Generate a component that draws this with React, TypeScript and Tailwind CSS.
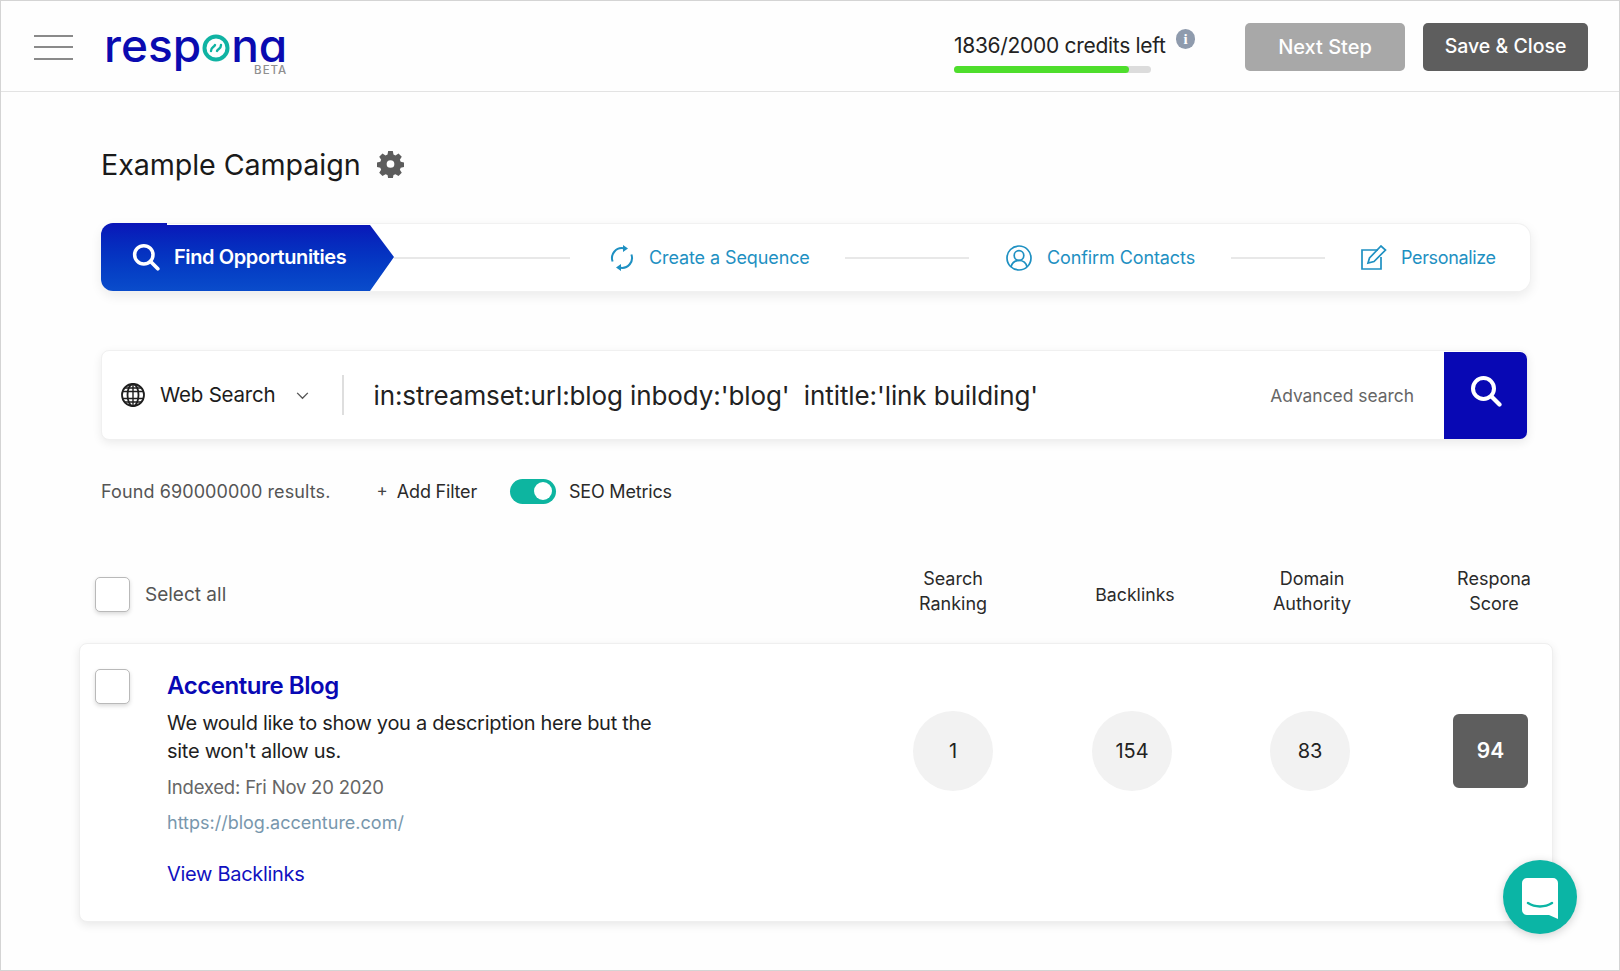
import { useState } from 'react'

function Checkbox() {
  return <div className="w-[35px] h-[35px] rounded-[5px] border border-[#b9b9b9] bg-white shadow-[0_2px_4px_rgba(0,0,0,0.15)] shrink-0" />
}

function SearchIcon({ className }: { className: string }) {
  return (
    <svg viewBox="0 0 32 32" fill="none" stroke="currentColor" className={className}>
      <circle cx="13.5" cy="13.5" r="10.5" strokeWidth="4" />
      <path d="M21.5 21.5 L29.5 29.5" strokeWidth="4.2" strokeLinecap="round" />
    </svg>
  )
}

function Gear() {
  return (
    <svg viewBox="0 0 28 28" className="w-[27px] h-[28px] ml-[16px] mt-[-2px] text-[#5c5c5c]" fill="currentColor">
      <path
        fillRule="evenodd"
        d="M11.6 0.6h4.8l0.7 3.6 2.1 0.9 3.1-2 3.4 3.4-2 3.1 0.9 2.1 3.6 0.7v4.8l-3.6 0.7-0.9 2.1 2 3.1-3.4 3.4-3.1-2-2.1 0.9-0.7 3.6h-4.8l-0.7-3.6-2.1-0.9-3.1 2-3.4-3.4 2-3.1-0.9-2.1-3.6-0.7v-4.8l3.6-0.7 0.9-2.1-2-3.1 3.4-3.4 3.1 2 2.1-0.9z M14 10a4 4 0 1 0 0 8 4 4 0 0 0 0-8z"
      />
    </svg>
  )
}

function Metric({ value }: { value: string }) {
  return <div className="w-[80px] h-[80px] rounded-full bg-[#f2f2f2] flex items-center justify-center text-[20px] text-[#222]">{value}</div>
}

export default function App() {
  const [seo, setSeo] = useState(true)

  return (
    <div className="relative w-[1620px] h-[971px] overflow-hidden bg-[#fefefe] border border-[#d4d4d4] font-['Inter',sans-serif] text-[#1c1c1c]">
      <header className="h-[91px] flex items-center border-b border-[#e3e3e3]">
        <div className="ml-[33px] mt-[2px] w-[39px] flex flex-col gap-[9.5px]">
          <span className="h-[2px] bg-[#8a8a8a]" />
          <span className="h-[2px] bg-[#8a8a8a]" />
          <span className="h-[2px] bg-[#8a8a8a]" />
        </div>
        <div className="relative ml-[31px] mt-[-2px] flex items-center text-[#0a0ab0] text-[46px] leading-[38px] font-medium [font-feature-settings:'cv11']">
          <span>resp</span>
          <svg viewBox="0 0 28 28" className="w-[28px] h-[28px] mt-[6px] mx-[1px]" fill="none" stroke="#10b3a3">
            <circle cx="14" cy="14" r="11.5" strokeWidth="4" />
            <path d="M9 17c0-4 3-3.500 4-6M19 11c0 4-3 3.500-4 6" strokeWidth="2.400" strokeLinecap="round" />
          </svg>
          <span>na</span>
          <span className="absolute right-0 top-[38px] text-[11.5px] leading-[12px] font-medium tracking-[1px] text-[#8f8f8f]">BETA</span>
        </div>

        <div className="ml-auto mt-[13px] flex flex-col">
          <div className="relative w-[241px] text-[21px] leading-[26px] tracking-[-0.3px] text-[#222]">
            1836/2000 credits left
            <span className="absolute right-0 top-[-4px] w-[19px] h-[20px] rounded-full bg-[#8f9bad] text-white text-[15px] leading-[20px] text-center font-semibold font-['Liberation_Serif',serif]">
              i
            </span>
          </div>
          <div className="mt-[7px] w-[197px] h-[7px] rounded-full bg-[#dcdcdc]">
            <div className="h-full w-[175px] rounded-full bg-[#4ede2c]" />
          </div>
        </div>
        <div className="ml-[50px] mr-[31px] mt-[2px] flex gap-[18px]">
          <button className="w-[160px] h-[48px] rounded-[5px] bg-[#a8a8a8] text-white text-[20px] font-medium">Next Step</button>
          <button className="w-[165px] h-[48px] rounded-[5px] bg-[#5e5e5e] text-white text-[19.5px] font-medium">Save &amp; Close</button>
        </div>
      </header>

      <main className="pl-[100px] pr-[60px]">
        <div className="flex items-center pt-[55px]">
          <h1 className="text-[28.7px] leading-[36px] tracking-[-0.1px] text-[#1a1a1a]">Example Campaign</h1>
          <Gear />
        </div>

        <div className="mt-[40px] h-[69px] w-[1430px] rounded-[14px] bg-white shadow-[0_4px_12px_rgba(0,0,0,0.08)] border border-[#f1f1f1] border-l-0 flex items-center text-[#1e90c2] text-[18px] tracking-[-0.1px]">
          <div className="w-[293px] h-[68px] mt-[-1px] rounded-l-[12px] bg-gradient-to-b from-[#0a14b8] to-[#0a4ccb] text-white flex items-center pl-[31px] gap-[14px] [clip-path:polygon(0_0,66px_0,66px_2px,269px_2px,293px_50%,269px_100%,0_100%)]">
            <SearchIcon className="w-[28px] h-[28px]" />
            <span className="text-[20px] font-semibold tracking-[-0.4px]">Find Opportunities</span>
          </div>
          <span className="w-[176px] h-[2px] bg-[#e8e8e8]" />

          <svg viewBox="0 0 24 26" fill="none" stroke="currentColor" strokeWidth="2" className="ml-[40px] w-[24px] h-[26px]">
            <path d="M2.600 16.500A10 10 0 0 1 13.500 3.200M21.400 9.500A10 10 0 0 1 10.500 22.800" />
            <path d="M13 0l5 3.500-5 3.500zM11 19l-5 3.500 5 3.500z" fill="currentColor" stroke="none" />
          </svg>
          <span className="ml-[15px] w-[161px] whitespace-nowrap">Create a Sequence</span>
          <span className="ml-[35px] w-[124px] h-[2px] bg-[#e8e8e8]" />

          <svg viewBox="0 0 26 26" fill="none" stroke="currentColor" strokeWidth="1.700" className="ml-[37px] w-[26px] h-[26px]">
            <circle cx="13" cy="13" r="12" />
            <circle cx="13" cy="10.500" r="4.800" />
            <path d="M5 22c1-5 4-6.500 8-6.500s7 1.500 8 6.500" />
          </svg>
          <span className="ml-[15px] w-[149px] whitespace-nowrap">Confirm Contacts</span>
          <span className="ml-[35px] w-[94px] h-[2px] bg-[#e8e8e8]" />

          <svg viewBox="0 0 26 25" fill="none" stroke="currentColor" strokeWidth="1.700" className="ml-[36px] w-[26px] h-[25px]">
            <path d="M17 5H1v19h19V12" />
            <path d="M7 18l1.500-5L20 1l4.500 4L13 16.500z" />
          </svg>
          <span className="ml-[14px] whitespace-nowrap tracking-[-0.35px]">Personalize</span>
        </div>

        <div className="mt-[58px] h-[90px] w-[1427px] rounded-[8px] bg-white shadow-[0_3px_10px_rgba(0,0,0,0.08)] border border-[#f0f0f0] flex items-center">
          <div className="ml-[19px] flex items-center">
            <svg viewBox="0 0 24 24" fill="none" stroke="#1f1f1f" strokeWidth="1.800" className="w-[24px] h-[24px]">
              <circle cx="12" cy="12" r="11" />
              <ellipse cx="12" cy="12" rx="5.500" ry="11" />
              <path d="M12 1v22M1.500 8.500h21M1.500 15.500h21M3.500 5h17M3.500 19h17" strokeWidth="1.400" />
            </svg>
            <span className="ml-[15px] text-[20.5px] leading-none tracking-[-0.2px]">Web Search</span>
            <svg viewBox="0 0 14 9" fill="none" stroke="#555" strokeWidth="1.500" className="ml-[21px] w-[13px] h-[8px] mt-[2px]">
              <path d="M1 1l6 6 6-6" />
            </svg>
            <span className="ml-[33px] w-[2px] h-[40px] bg-[#dedede]" />
          </div>
          <span className="ml-[29px] text-[26px] tracking-[-0.1px] text-[#222] whitespace-pre">in:streamset:url:blog inbody:'blog'  intitle:'link building'</span>
          <span className="ml-auto mr-[30px] mt-[3px] text-[17.4px] text-[#666]">Advanced search</span>
          <button className="w-[83px] h-[87px] rounded-r-[7px] bg-[#0808b4] text-white flex items-center justify-center">
            <SearchIcon className="w-[32px] h-[32px] mt-[-8px]" />
          </button>
        </div>

        <div className="mt-[38px] h-[26px] flex items-center text-[18px] tracking-[0.1px]">
          <span className="text-[#555]">Found 690000000 results.</span>
          <span className="ml-[46px] text-[#444] text-[17px]">+</span>
          <span className="ml-[9px] text-[#2a2a2a] tracking-[-0.2px]">Add Filter</span>
          <button
            onClick={() => setSeo(!seo)}
            className={`ml-[33px] w-[46px] h-[25px] rounded-full flex items-center px-[4px] ${seo ? 'bg-[#0db5a0] justify-end' : 'bg-[#ccc] justify-start'}`}
          >
            <span className="w-[18px] h-[18px] rounded-full bg-white" />
          </button>
          <span className="ml-[13px] text-[#2a2a2a] tracking-[-0.2px]">SEO Metrics</span>
        </div>

        <div className="mt-[65px] flex items-center h-[50px] text-[18px] leading-[25px] text-center text-[#2a2a2a]">
          <div className="ml-[-6px] w-[136px] shrink-0 flex items-center">
            <Checkbox />
            <span className="ml-[15px] text-[#555] text-[19px] whitespace-nowrap">Select all</span>
          </div>
          <div className="w-[100px] shrink-0 ml-[672px] mt-[-6px]">Search Ranking</div>
          <div className="w-[100px] shrink-0 ml-[82px] text-[17.7px]">Backlinks</div>
          <div className="w-[100px] shrink-0 ml-[77px] mt-[-6px]">Domain Authority</div>
          <div className="w-[100px] shrink-0 ml-[82px] mt-[-6px]">Respona Score</div>
        </div>

        <section className="ml-[-22px] mt-[24px] w-[1474px] h-[279px] rounded-[8px] bg-white shadow-[0_3px_10px_rgba(0,0,0,0.09)] border border-[#efefef] flex">
          <div className="ml-[15px] mt-[25px]">
            <Checkbox />
          </div>
          <div className="ml-[37px] mt-[27px] w-[500px]">
            <h2 className="text-[24px] leading-[30px] font-semibold tracking-[-0.45px] text-[#0808b4]">Accenture Blog</h2>
            <p className="mt-[8px] text-[20px] leading-[28px] tracking-[-0.28px] text-[#1f1f1f]">
              We would like to show you a description here but the site won't allow us.
            </p>
            <p className="mt-[9px] text-[18.5px] leading-[26px] tracking-[-0.2px] text-[#666]">Indexed: Fri Nov 20 2020</p>
            <p className="mt-[10px] text-[18px] leading-[26px] text-[#7897ad]">https://blog.accenture.com/</p>
            <p className="mt-[25px] text-[20px] leading-[26px] tracking-[-0.3px] text-[#1111c0]">View Backlinks</p>
          </div>
          <div className="ml-[246px] mt-[67px] flex items-start">
            <Metric value="1" />
            <div className="ml-[99px]"><Metric value="154" /></div>
            <div className="ml-[98px]"><Metric value="83" /></div>
            <div className="ml-[103px] mt-[3px] w-[75px] h-[74px] rounded-[6px] bg-[#5e5e5e] text-white text-[21px] font-semibold flex items-center justify-center">94</div>
          </div>
        </section>
      </main>

      <div className="absolute left-[1502px] top-[859px] w-[74px] h-[74px] rounded-full bg-[#0bb5a5] shadow-[0_2px_10px_rgba(0,0,0,0.18)] flex items-center justify-center">
        <svg viewBox="0 0 36 41" className="w-[36px] h-[41px] mt-[2px]">
          <path d="M5 0h26a5 5 0 0 1 5 5v36l-9-4H5a5 5 0 0 1-5-5V5a5 5 0 0 1 5-5z" fill="#fff" />
          <path d="M6 25c7 4.500 17 4.500 24 0" fill="none" stroke="#0bb5a5" strokeWidth="2.500" strokeLinecap="round" />
        </svg>
      </div>
    </div>
  )
}
